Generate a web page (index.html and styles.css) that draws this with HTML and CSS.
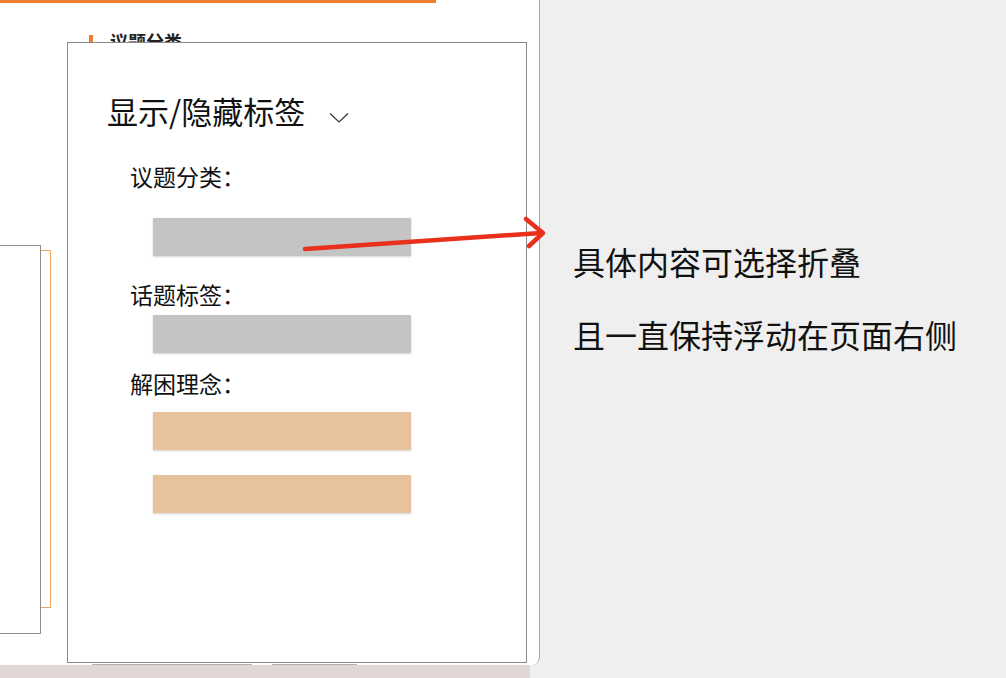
FILE: index.html
```html
<!DOCTYPE html>
<html lang="zh">
<head>
<meta charset="utf-8">
<title>显示/隐藏标签</title>
<link rel="stylesheet" href="styles.css">
</head>
<body>
<div class="page">
  <div class="left">
    <div class="slide">
      <div class="topbar"></div>
      <div class="heading"><span class="mark"></span><span>议题分类</span></div>
      <div class="boxes">
        <div class="box-orange"></div>
        <div class="box-gray"></div>
      </div>
      <div class="foot">
        <span class="foot-a">媒体新闻内容研究</span>
        <span class="foot-b">新闻分享</span>
      </div>

      <div class="popup">
        <div class="title-row">
          <span class="title">显示/隐藏标签</span>
          <svg class="chev" width="20" height="11" viewBox="0 0 20 11"><path d="M1 1.5 L10 10 L19 1.5" fill="none" stroke="#333" stroke-width="1.2"/></svg>
        </div>
        <div class="label l1">议题分类：</div>
        <div class="bar gray b1"></div>
        <div class="label l2">话题标签：</div>
        <div class="bar gray b2"></div>
        <div class="label l3">解困理念：</div>
        <div class="bar orange b3"></div>
        <div class="bar orange b4"></div>
      </div>
    </div>
    <div class="strip"></div>
  </div>
  <div class="note">
    <p class="line1">具体内容可选择折叠</p>
    <p class="line2">且一直保持浮动在页面右侧</p>
  </div>
  <svg class="arrow" width="1006" height="678" viewBox="0 0 1006 678">
    <path d="M305 249 L541 233" stroke="#e8301c" stroke-width="4.5" stroke-linecap="round" fill="none"/>
    <path d="M526 219 L543 233 L529 246" stroke="#e8301c" stroke-width="4.5" stroke-linecap="round" stroke-linejoin="round" fill="none"/>
  </svg>
</div>
</body>
</html>
```

FILE: styles.css
```css
html, body {
  margin: 0;
  padding: 0;
}
body {
  background: #efefef;
  font-family: "Noto Sans CJK SC", "Noto Sans", sans-serif;
  color: #111;
}
.page {
  position: relative;
  width: 1006px;
  height: 678px;
  overflow: hidden;
  display: flex;
}
.left {
  width: 540px;
  flex: none;
  display: flex;
  flex-direction: column;
}
.slide {
  position: relative;
  box-sizing: border-box;
  width: 540px;
  height: 665px;
  background: #fff;
  border-right: 1px solid #a8a8a8;
  border-bottom-right-radius: 8px;
  overflow: hidden;
  display: flex;
  flex-direction: column;
}
.topbar {
  width: 436px;
  height: 3px;
  background: #ed7d31;
  flex: none;
}
.heading {
  margin-top: 29px;
  padding-left: 89px;
  display: flex;
  align-items: flex-start;
  gap: 17px;
  font-size: 18px;
  line-height: 18px;
  font-weight: bold;
  color: #222;
  flex: none;
}
.mark {
  width: 4px;
  height: 16px;
  margin-top: 3px;
  background: #ed7d31;
}
.boxes {
  margin-top: 194px;
  display: grid;
  flex: none;
}
.box-gray, .box-orange {
  grid-area: 1 / 1;
  box-sizing: border-box;
}
.box-gray {
  width: 41px;
  height: 389px;
  background: #fff;
  border: 1px solid #8c8c8c;
  border-left: none;
}
.box-orange {
  margin-top: 5px;
  width: 51px;
  height: 358px;
  border: 1.5px solid #efa65c;
  border-left: none;
}
.foot {
  margin-top: 30px;
  display: flex;
  padding-left: 92px;
  gap: 20px;
  font-size: 15px;
  line-height: 18px;
  color: #333;
  flex: none;
}
.foot-a, .foot-b {
  border-top: 1px solid #b0b0b0;
  padding-top: 1px;
  white-space: nowrap;
  box-sizing: border-box;
}
.foot-a {
  width: 160px;
  padding-left: 15px;
}
.foot-b {
  width: 85px;
  padding-left: 16px;
}
.popup {
  position: absolute;
  left: 67px;
  top: 42px;
  box-sizing: border-box;
  width: 460px;
  height: 621px;
  background: #fff;
  border: 1px solid #8a8a8a;
  padding: 52px 0 0 39px;
  display: flex;
  flex-direction: column;
  align-items: flex-start;
}
.title-row {
  display: flex;
  align-items: flex-start;
  gap: 24px;
}
.title {
  font-size: 31px;
  line-height: 31px;
  color: #111;
}
.chev {
  margin-top: 17px;
}
.label {
  font-size: 23px;
  line-height: 23px;
  margin-left: 23px;
  color: #111;
}
.l1 { margin-top: 39px; }
.l2 { margin-top: 27px; }
.l3 { margin-top: 19px; }
.bar {
  width: 258px;
  height: 38px;
  margin-left: 46px;
  box-shadow: 0 1px 2px rgba(0, 0, 0, 0.18);
}
.gray { background: #c4c4c4; }
.orange { background: #e8c29c; }
.b1 { margin-top: 30px; }
.b2 { margin-top: 9px; }
.b3 { margin-top: 17px; }
.b4 { margin-top: 25px; }
.strip {
  width: 530px;
  height: 13px;
  background: #e2d7d5;
}
.note {
  padding-left: 33px;
  padding-top: 245px;
  font-size: 32px;
  line-height: 32px;
  color: #111;
}
.note p {
  margin: 0;
  white-space: nowrap;
}
.line2 {
  margin-top: 41px !important;
}
.arrow {
  position: absolute;
  left: 0;
  top: 0;
  pointer-events: none;
}
```
